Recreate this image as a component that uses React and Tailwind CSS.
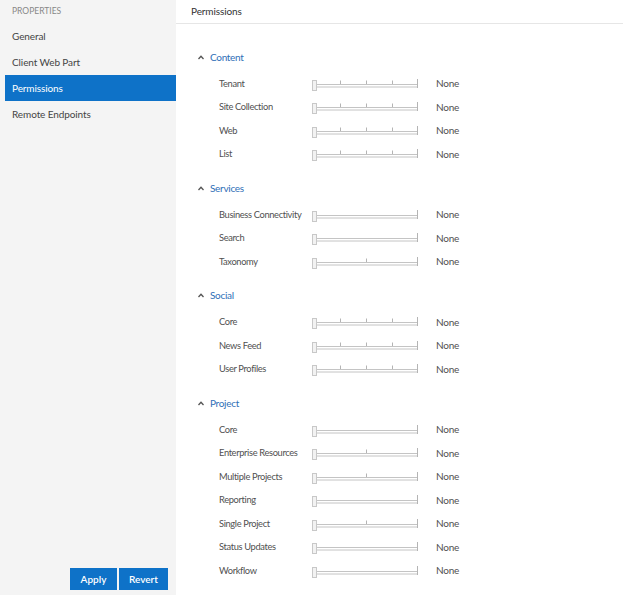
import React from "react";

const sections = [
  {
    title: "Content",
    rows: [
      { name: "Tenant", ticks: "full" },
      { name: "Site Collection", ticks: "full" },
      { name: "Web", ticks: "full" },
      { name: "List", ticks: "full" },
    ],
  },
  {
    title: "Services",
    rows: [
      { name: "Business Connectivity", ticks: "none" },
      { name: "Search", ticks: "none" },
      { name: "Taxonomy", ticks: "mid" },
    ],
  },
  {
    title: "Social",
    rows: [
      { name: "Core", ticks: "full" },
      { name: "News Feed", ticks: "full" },
      { name: "User Profiles", ticks: "full" },
    ],
  },
  {
    title: "Project",
    rows: [
      { name: "Core", ticks: "none" },
      { name: "Enterprise Resources", ticks: "mid" },
      { name: "Multiple Projects", ticks: "mid" },
      { name: "Reporting", ticks: "none" },
      { name: "Single Project", ticks: "mid" },
      { name: "Status Updates", ticks: "none" },
      { name: "Workflow", ticks: "none" },
    ],
  },
];

const tickSets = { full: [28, 54, 80], mid: [54], none: [] };

function Slider({ ticks }) {
  return (
    <svg width="108" height="14" viewBox="0 0 108 14" className="block shrink-0">
      {tickSets[ticks].map((x) => (
        <line key={x} x1={x + 0.5} y1="3.5" x2={x + 0.5} y2="7.5" stroke="#b4b4b4" />
      ))}
      <rect x="2.5" y="7.5" width="103" height="2.5" fill="#fff" stroke="#c4c4c4" />
      <line x1="105.5" y1="2" x2="105.5" y2="11" stroke="#b4b4b4" />
      <rect x="0.5" y="3.5" width="4" height="10" fill="#f2f2f2" stroke="#c8c8c8" />
    </svg>
  );
}

function Section({ data }) {
  return (
    <div>
      <div className="h-[24px] flex items-center pl-[22px] gap-[6px]">
        <svg width="6" height="5" viewBox="0 0 6 5">
          <polyline points="0.5,4 3,1.2 5.5,4" fill="none" stroke="#555" strokeWidth="1.3" />
        </svg>
        <span className="text-[#2f6fb7] tracking-[-0.3px]">{data.title}</span>
      </div>
      <div className="mt-[3px]">
        {data.rows.map((row, i) => (
          <div key={i} className="h-[23.5px] flex items-center pl-[43px] text-[#505050]">
            <span className="w-[93px] shrink-0 whitespace-nowrap text-[9.3px] tracking-[-0.35px]">
              {row.name}
            </span>
            <Slider ticks={row.ticks} />
            <span className="ml-[16px] tracking-[-0.25px]">None</span>
          </div>
        ))}
      </div>
    </div>
  );
}

export default function App() {
  const nav = ["General", "Client Web Part", "Permissions", "Remote Endpoints"];
  return (
    <div className="flex w-[628px] h-[599px] bg-white text-[10px] font-['Lato',sans-serif]">
      <aside className="w-[176px] h-[595px] bg-[#f4f4f4] flex flex-col">
        <div className="h-[23px] flex items-center pl-[12px] text-[8.5px] text-[#888] uppercase">
          Properties
        </div>
        {nav.map((item) => (
          <div
            key={item}
            className={
              item === "Permissions"
                ? "h-[26px] ml-[5px] pl-[7px] pt-[1px] flex items-center bg-[#0e72c8] text-white tracking-[-0.1px]"
                : "h-[26px] ml-[5px] pl-[7px] pt-[1px] flex items-center text-[#444] tracking-[-0.1px]"
            }
          >
            {item}
          </div>
        ))}
        <div className="flex-1" />
        <div className="flex justify-end gap-[2px] pr-[8px] pb-[5px]">
          <button className="w-[47px] h-[22px] bg-[#0e72c8] text-white font-semibold">Apply</button>
          <button className="w-[49px] h-[22px] bg-[#0e72c8] text-white font-semibold">Revert</button>
        </div>
      </aside>
      <main className="flex-1 pr-[5px]">
        <div className="h-[24px] border-b border-[#e6e6e6] flex items-center pl-[15px] tracking-[-0.1px] text-[#333]">
          Permissions
        </div>
        <div className="pt-[21px] flex flex-col gap-[10px]">
          {sections.map((s) => (
            <Section key={s.title} data={s} />
          ))}
        </div>
      </main>
    </div>
  );
}
